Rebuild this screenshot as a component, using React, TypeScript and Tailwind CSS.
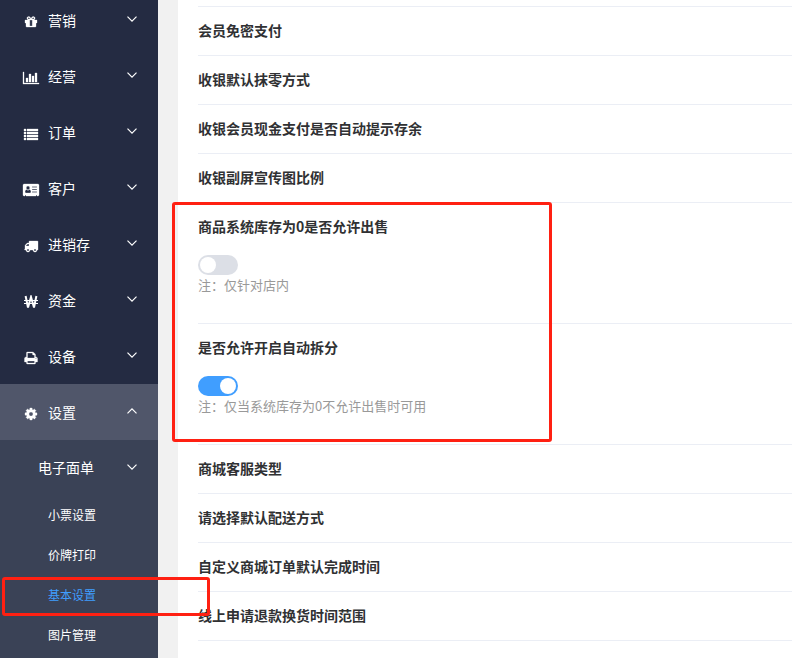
import React, { useState } from "react";

interface IconProps {
  width?: number;
  viewWidth?: number;
  d: string;
}

const Icon = ({ width = 14, viewWidth = 1792, d }: IconProps) => (
  <svg
    width={width}
    height={14}
    viewBox={`0 0 ${viewWidth} 1792`}
    fill="currentColor"
    fillRule="evenodd"
    stroke="currentColor"
    strokeWidth={40}
    className="overflow-visible"
    aria-hidden="true"
  >
    <path d={d} />
  </svg>
);

const Chevron = ({ up = false }: { up?: boolean }) => (
  <svg
    width={12}
    height={12}
    viewBox="0 0 12 12"
    fill="none"
    stroke="currentColor"
    strokeWidth={1.2}
    className={up ? "mb-0.5 rotate-180" : "mb-0.5"}
    aria-hidden="true"
  >
    <path d="M1.5 3.7 6 8.2 10.5 3.7" />
  </svg>
);

const MENU = [
  {
    label: "营销",
    icon: (
      <Icon d="M1056 1356v-716h-320v716q0 25 18 38.5t46 13.5h192q28 0 46-13.5t18-38.5zm-456-844h195l-126-161q-26-31-69-31-40 0-68 28t-28 68 28 68 68 28zm688-96q0-40-28-68t-68-28q-43 0-69 31l-125 161h194q40 0 68-28t28-68zm376 256v320q0 14-9 23t-23 9h-96v416q0 40-28 68t-68 28h-1088q-40 0-68-28t-28-68v-416h-96q-14 0-23-9t-9-23v-320q0-14 9-23t23-9h440q-93 0-158.5-65.5t-65.5-158.5 65.5-158.5 158.5-65.5q107 0 168 77l128 165 128-165q61-77 168-77 93 0 158.5 65.5t65.5 158.5-65.5 158.5-158.5 65.5h440q14 0 23 9t9 23z" />
    ),
  },
  {
    label: "经营",
    icon: (
      <Icon
        width={16}
        viewWidth={2048}
        d="M640 896v512h-256v-512h256zm384-512v1024h-256v-1024h256zm1024 1152v128h-2048v-1536h128v1408h1920zm-640-896v768h-256v-768h256zm384-384v1152h-256v-1152h256z"
      />
    ),
  },
  {
    label: "订单",
    icon: (
      <Icon d="M0 256h256v256h-256zM384 256h1408v256h-1408zM0 640h256v256h-256zM384 640h1408v256h-1408zM0 1024h256v256h-256zM384 1024h1408v256h-1408zM0 1408h256v256h-256zM384 1408h1408v256h-1408z" />
    ),
  },
  {
    label: "客户",
    icon: (
      <Icon
        width={16}
        viewWidth={2048}
        d="M160 128h1728q66 0 113 47t47 113v1216q0 66-47 113t-113 47h-96v-96q0-32-32-32h-64q-32 0-32 32v96h-1280v-96q0-32-32-32h-64q-32 0-32 32v96h-96q-66 0-113-47t-47-113v-1216q0-66 47-113t113-47zM640 384q-92 0-156 70t-64 170 64 170 156 70 156-70 64-170-64-170-156-70zM440 830q-184 50-184 290 0 160 130 160h508q130 0 130-160 0-240-184-290-80 82-200 82t-200-82zM1152 448v128h640v-128zM1152 768v128h640v-128zM1152 1088v128h640v-128z"
      />
    ),
  },
  {
    label: "进销存",
    icon: (
      <Icon d="M640 1408q0-52-38-90t-90-38-90 38-38 90 38 90 90 38 90-38 38-90zm-384-512h384v-256h-158q-13 0-22 9l-195 195q-9 9-9 22v30zm1280 512q0-52-38-90t-90-38-90 38-38 90 38 90 90 38 90-38 38-90zm256-1088v1024q0 15-4 26.5t-13.5 18.5-16.5 11.5-23.5 6-22.5 2-25.5 0-22.5-.5q0 106-75 181t-181 75-181-75-75-181h-384q0 106-75 181t-181 75-181-75-75-181h-64q-3 0-22.5.5t-25.5 0-22.5-2-23.5-6-16.5-11.5-13.5-18.5-4-26.5q0-26 19-45t45-19v-320q0-8-.5-35t0-38 2.5-34.5 6.5-37 14-30.5 22.5-30l198-198q19-19 50.5-32t58.5-13h160v-192q0-26 19-45t45-19h1024q26 0 45 19t19 45z" />
    ),
  },
  {
    label: "资金",
    icon: (
      <svg
        width={14}
        height={14}
        viewBox="0 0 14 14"
        fill="none"
        stroke="currentColor"
        aria-hidden="true"
      >
        <path strokeWidth={2} d="M1.6 1 4 12.5 7 2 10 12.5 12.4 1" />
        <path strokeWidth={1.2} d="M0 5.5H14M0 8.5H14" />
      </svg>
    ),
  },
  {
    label: "设备",
    icon: (
      <Icon d="M448 1536h896v-256h-896v256zm0-640h896v-384h-160q-40 0-68-28t-28-68v-160h-640v640zm1152 64q0-26-19-45t-45-19-45 19-19 45 19 45 45 19 45-19 19-45zm128 0v416q0 13-9.5 22.5t-22.5 9.5h-224v160q0 40-28 68t-68 28h-960q-40 0-68-28t-28-68v-160h-224q-13 0-22.5-9.5t-9.5-22.5v-416q0-79 56.5-135.5t135.5-56.5h64v-544q0-40 28-68t68-28h672q40 0 88 20t76 48l152 152q28 28 48 76t20 88v256h64q79 0 135.5 56.5t56.5 135.5z" />
    ),
  },
  {
    label: "设置",
    active: true,
    icon: (
      <Icon d="M1152 896q0-106-75-181t-181-75-181 75-75 181 75 181 181 75 181-75 75-181zm512-109v222q0 12-8 23t-20 13l-185 28q-19 54-39 91 35 50 107 138 10 12 10 25t-9 23q-27 37-99 108t-94 71q-12 0-26-9l-138-108q-44 23-91 38-16 136-29 186-7 28-36 28h-222q-14 0-24.5-8.5t-11.5-21.5l-28-184q-49-16-90-37l-141 107q-10 9-25 9-14 0-25-11-126-114-165-168-7-10-7-23 0-12 8-23 15-21 51-66.5t54-70.5q-27-50-41-99l-183-27q-13-2-21-12.5t-8-23.5v-222q0-12 8-23t19-13l186-28q14-46 39-92-40-57-107-138-10-12-10-24 0-10 9-23 26-36 98.5-107.5t94.5-71.5q13 0 26 10l138 107q44-23 91-38 16-136 29-186 7-28 36-28h222q14 0 24.5 8.5t11.5 21.5l28 184q49 16 90 37l142-107q9-9 24-9 13 0 25 10 129 119 165 170 7 8 7 22 0 12-8 23-15 21-51 66.5t-54 70.5q26 50 41 98l183 28q13 2 21 12.5t8 23.5z" />
    ),
  },
];

const SUB_MENU = ["小票设置", "价牌打印", "基本设置", "图片管理"];

const Sidebar = () => (
  <nav className="relative z-10 -mt-2 w-[158px] shrink-0 bg-[#242b42] text-sm text-white">
    <ul>
      {MENU.map(({ label, icon, active }) => (
        <li key={label}>
          <button
            type="button"
            aria-expanded={!!active}
            className={`flex h-14 w-full items-center pr-5 pl-[19px] ${active ? "bg-[#50566a]" : ""}`}
          >
            <span className="flex w-6 justify-center pt-1">{icon}</span>
            <span className="ml-[5px] flex-1 text-left">{label}</span>
            <Chevron up={active} />
          </button>
        </li>
      ))}
    </ul>
    <div className="bg-[#3a4256] pb-10">
      <button
        type="button"
        aria-expanded={false}
        className="flex h-14 w-full items-center pr-5 pl-[38px]"
      >
        <span className="flex-1 pb-0.5 text-left">电子面单</span>
        <Chevron />
      </button>
      <ul className="text-xs">
        {SUB_MENU.map((label) => {
          const current = label === "基本设置";
          return (
            <li key={label} className="relative">
              <a
                href="#"
                aria-current={current ? "page" : undefined}
                className={`flex h-10 items-center pb-0.5 pl-12 ${current ? "text-[#409eff]" : ""}`}
              >
                {label}
              </a>
              {current && (
                <div className="pointer-events-none absolute top-px left-0.5 h-[39px] w-[208px] rounded-[3px] border-3 border-[#ff2012]" />
              )}
            </li>
          );
        })}
      </ul>
    </div>
  </nav>
);

const Row = ({ title }: { title: string }) => (
  <div className="flex h-[49px] items-center border-b border-[#ebeef5] pb-0.5">
    <h3 className="font-bold">{title}</h3>
  </div>
);

interface SwitchRowProps {
  id: string;
  title: string;
  note: string;
  defaultOn?: boolean;
}

const SwitchRow = ({ id, title, note, defaultOn = false }: SwitchRowProps) => {
  const [isOn, setIsOn] = useState(defaultOn);

  return (
    <div className="border-b border-[#ebeef5] pb-7">
      <label htmlFor={id} className="flex h-12 items-center pb-0.5 font-bold">
        {title}
      </label>
      <input
        id={id}
        type="checkbox"
        role="switch"
        checked={isOn}
        onChange={() => setIsOn((prev) => !prev)}
        className="mt-1 block h-5 w-10 cursor-pointer appearance-none rounded-full bg-[#dcdfe6] p-0.5 before:block before:size-4 before:rounded-full before:bg-white checked:bg-[#409eff] checked:before:ml-5"
      />
      <p className="text-[13px] leading-5 text-[#999]">{note}</p>
    </div>
  );
};

const App = () => (
  <div className="flex h-screen overflow-hidden bg-[#f1f1f1] font-['Noto_Sans_CJK_SC','Liberation_Sans',sans-serif]">
    <Sidebar />
    <main className="ml-5 min-w-0 flex-1 bg-white pt-1.5 pl-5 text-sm text-[#303133]">
      <div className="border-t border-[#ebeef5]">
        <Row title="会员免密支付" />
        <Row title="收银默认抹零方式" />
        <Row title="收银会员现金支付是否自动提示存余" />
        <Row title="收银副屏宣传图比例" />
        <div className="relative">
          <SwitchRow
            id="zero-stock"
            title="商品系统库存为0是否允许出售"
            note="注：仅针对店内"
          />
          <SwitchRow
            id="auto-split"
            title="是否允许开启自动拆分"
            note="注：仅当系统库存为0不允许出售时可用"
            defaultOn
          />
          <div className="pointer-events-none absolute -top-px bottom-[3px] -left-[26px] w-[380px] rounded-[3px] border-3 border-[#ff2012]" />
        </div>
        <Row title="商城客服类型" />
        <Row title="请选择默认配送方式" />
        <Row title="自定义商城订单默认完成时间" />
        <Row title="线上申请退款换货时间范围" />
      </div>
    </main>
  </div>
);

export default App;
